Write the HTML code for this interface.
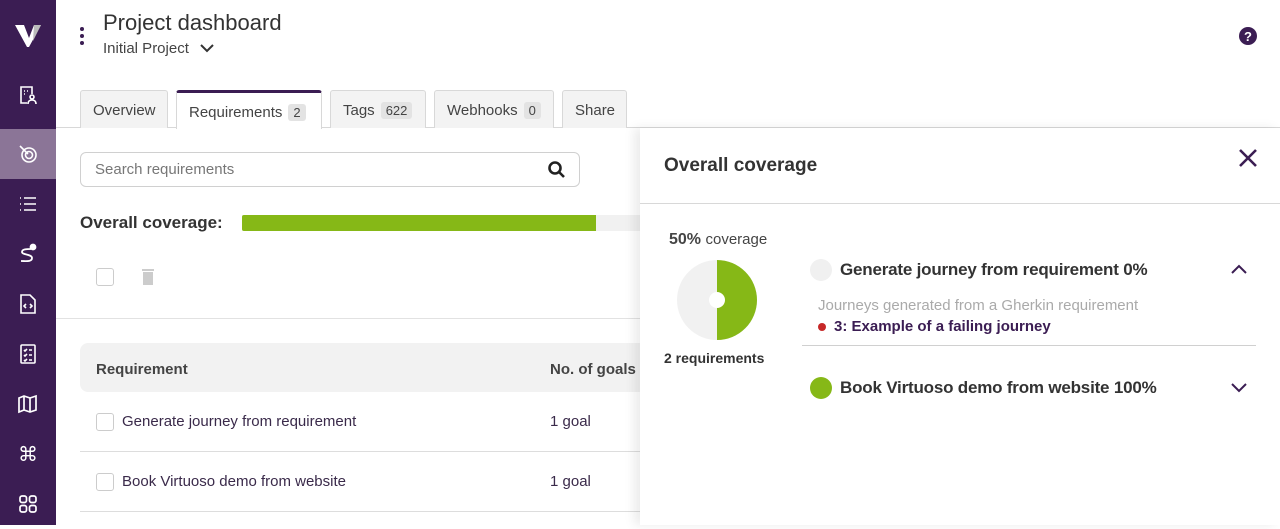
<!DOCTYPE html>
<html><head><style>
*{box-sizing:border-box;margin:0;padding:0}
body{width:1280px;height:525px;overflow:hidden;font-family:"Liberation Sans",sans-serif;background:#fff;position:relative;color:#333}
.sb{position:absolute;left:0;top:0;width:56px;height:525px;background:#3b1d53}
.sb .it{position:absolute;left:0;width:56px;height:50px;display:flex;align-items:center;justify-content:center}
.a{position:absolute}
.tab{position:absolute;top:90px;height:38px;border:1px solid #d8d8d8;border-bottom:none;background:#f3f3f3;border-radius:3px 3px 0 0;font-size:15px;color:#444;padding:11px 12px 0}
.badge{display:inline-block;background:#e3e3e3;border-radius:3px;font-size:13px;padding:1px 5px;margin-left:6px;color:#444}
</style></head><body>
<div class="sb">
 <svg class="a" style="left:15px;top:25px" width="26" height="22" viewBox="0 0 26 22"><path d="M0 0h9l5 13 5-13h7L14 22h-2z" fill="#fff"/><path d="M19 0h7L18 16z" fill="#bbb"/></svg>
 <div class="it" style="top:70px"><svg width="20" height="20" fill="none" stroke="#fff" stroke-width="1.6"><path d="M9 18H3V2h11v7"/><circle cx="14" cy="12" r="2"/><path d="M10 19c0-3 2-4 4-4s4 1 4 4"/><path d="M6 6h1M9 6h1M6 9h1"/></svg></div>
 <div class="it" style="top:129px;background:#8b7597"><svg width="22" height="22" fill="none" stroke="#fff" stroke-width="1.6"><circle cx="12" cy="12" r="7"/><circle cx="12" cy="12" r="3.5"/><path d="M3 3l8 8"/></svg></div>
 <div class="it" style="top:179px"><svg width="20" height="20" fill="none" stroke="#fff" stroke-width="1.6"><path d="M6 4h12M6 10h12M6 16h12M2 4h1M2 10h1M2 16h1"/></svg></div>
 <div class="it" style="top:229px"><svg width="20" height="22" fill="none" stroke="#fff" stroke-width="1.8"><circle cx="15" cy="4" r="2.5" fill="#fff"/><path d="M13 6c-4 0-9 0-9 3s10 2 10 6-6 3-11 3"/></svg></div>
 <div class="it" style="top:279px"><svg width="20" height="22" fill="none" stroke="#fff" stroke-width="1.6"><path d="M3 2h9l5 5v13H3z"/><path d="M8 11l-2 2 2 2M12 11l2 2-2 2"/></svg></div>
 <div class="it" style="top:329px"><svg width="20" height="22" fill="none" stroke="#fff" stroke-width="1.6"><rect x="3" y="2" width="14" height="18" rx="1"/><path d="M6 7l1 1 2-2M6 12l1 1 2-2M6 17l1 1 2-2M11 7h3M11 12h3M11 17h3"/></svg></div>
 <div class="it" style="top:379px"><svg width="22" height="20" fill="none" stroke="#fff" stroke-width="1.7"><path d="M2 4l5-2 6 2 6-2v14l-6 2-6-2-5 2zM7 2v14M13 4v14"/></svg></div>
 <div class="it" style="top:429px"><span style="color:#fff;font-size:20px;font-family:'DejaVu Sans'">⌘</span></div>
 <div class="it" style="top:479px"><svg width="20" height="20" fill="none" stroke="#fff" stroke-width="1.7"><rect x="2" y="2" width="6.5" height="6.5" rx="2"/><rect x="11.5" y="2" width="6.5" height="6.5" rx="2"/><rect x="2" y="11.5" width="6.5" height="6.5" rx="2"/><rect x="11.5" y="11.5" width="6.5" height="6.5" rx="2"/></svg></div>
</div>
<svg class="a" style="left:79px;top:26px" width="6" height="20"><circle cx="3" cy="3" r="2" fill="#3b1d53"/><circle cx="3" cy="10" r="2" fill="#3b1d53"/><circle cx="3" cy="17" r="2" fill="#3b1d53"/></svg>
<div class="a" style="left:103px;top:10px;font-size:22px;color:#333">Project dashboard</div>
<div class="a" style="left:103px;top:40px;font-size:15px;color:#444">Initial Project</div>
<svg class="a" style="left:199px;top:43px" width="16" height="11" fill="none" stroke="#333" stroke-width="2"><path d="M2 2l6 6 6-6"/></svg>
<svg class="a" style="left:1238px;top:26px" width="20" height="20"><circle cx="10" cy="10" r="9" fill="#3b1d53"/><text x="10" y="15" font-size="13" font-weight="bold" fill="#fff" text-anchor="middle" font-family="Liberation Sans">?</text></svg>

<div class="a" style="left:56px;top:127px;width:1224px;height:1px;background:#d8d8d8"></div>
<div class="tab" style="left:80px;width:88px">Overview</div>
<div class="tab" style="left:176px;width:146px;background:#fff;height:39px;border-top:3px solid #3b1d53;padding-top:11px">Requirements<span class="badge">2</span></div>
<div class="tab" style="left:330px;width:96px">Tags<span class="badge">622</span></div>
<div class="tab" style="left:434px;width:120px">Webhooks<span class="badge">0</span></div>
<div class="tab" style="left:562px;width:65px">Share</div>

<div class="a" style="left:80px;top:152px;width:500px;height:35px;border:1px solid #d0d0d0;border-radius:6px;padding:8px 14px;font-size:15px;color:#777">Search requirements</div>
<svg class="a" style="left:547px;top:160px" width="20" height="20" fill="none" stroke="#222" stroke-width="2.6"><circle cx="8" cy="8" r="5.5"/><path d="M12 12l5 5"/></svg>
<div class="a" style="left:80px;top:213px;font-size:17px;font-weight:bold;color:#333">Overall coverage:</div>
<div class="a" style="left:242px;top:215px;width:400px;height:16px;background:#f1f1f1"></div>
<div class="a" style="left:242px;top:215px;width:354px;height:16px;background:#86b817;border-radius:2px 0 0 2px"></div>
<div class="a" style="left:96px;top:268px;width:18px;height:18px;border:1px solid #ccc;border-radius:3px"></div>
<svg class="a" style="left:141px;top:268px" width="14" height="18"><rect x="1" y="1" width="12" height="2" fill="#ccc"/><rect x="2" y="4" width="10" height="13" fill="#ccc"/></svg>
<div class="a" style="left:56px;top:318px;width:600px;height:1px;background:#e2e2e2"></div>
<div class="a" style="left:80px;top:343px;width:580px;height:49px;background:#f2f2f2;border-radius:8px 0 0 8px"></div>
<div class="a" style="left:96px;top:361px;font-size:15px;font-weight:bold;color:#444">Requirement</div>
<div class="a" style="left:550px;top:361px;font-size:15px;font-weight:bold;color:#444">No. of goals</div>
<div class="a" style="left:96px;top:413px;width:18px;height:18px;border:1px solid #ccc;border-radius:3px"></div>
<div class="a" style="left:122px;top:413px;font-size:15px;color:#3a2a4a">Generate journey from requirement</div>
<div class="a" style="left:550px;top:413px;font-size:15px;color:#3a2a4a">1 goal</div>
<div class="a" style="left:80px;top:451px;width:580px;height:1px;background:#ddd"></div>
<div class="a" style="left:96px;top:473px;width:18px;height:18px;border:1px solid #ccc;border-radius:3px"></div>
<div class="a" style="left:122px;top:473px;font-size:15px;color:#3a2a4a">Book Virtuoso demo from website</div>
<div class="a" style="left:550px;top:473px;font-size:15px;color:#3a2a4a">1 goal</div>
<div class="a" style="left:80px;top:511px;width:580px;height:1px;background:#ddd"></div>

<div class="a" style="left:640px;top:128px;width:640px;height:397px;background:#fff;box-shadow:-6px 0 10px rgba(0,0,0,0.08)"></div>
<div class="a" style="left:664px;top:155px;font-size:19px;font-weight:bold;color:#333">Overall coverage</div>
<svg class="a" style="left:1238px;top:148px" width="20" height="20" stroke="#3b1d53" stroke-width="2.6"><path d="M2 2l16 16M18 2L2 18"/></svg>
<div class="a" style="left:640px;top:203px;width:640px;height:1px;background:#d8d8d8"></div>
<div class="a" style="left:669px;top:231px;font-size:16px;color:#444"><b>50%</b> <span style="font-size:15px">coverage</span></div>
<svg class="a" style="left:677px;top:260px" width="80" height="80"><circle cx="40" cy="40" r="40" fill="#f1f1f1"/><path d="M40 0a40 40 0 0 1 0 80z" fill="#86b817"/><circle cx="40" cy="40" r="8" fill="#fff"/></svg>
<div class="a" style="left:664px;top:350px;font-size:14px;font-weight:bold;color:#333">2 requirements</div>
<div class="a" style="left:810px;top:259px;width:22px;height:22px;border-radius:50%;background:#f0f0f0"></div>
<div class="a" style="left:840px;top:260px;font-size:17px;font-weight:bold;color:#333;letter-spacing:-0.2px">Generate journey from requirement 0%</div>
<svg class="a" style="left:1230px;top:263px" width="18" height="12" fill="none" stroke="#3b1d53" stroke-width="2"><path d="M2 10l7-7 7 7"/></svg>
<div class="a" style="left:818px;top:297px;font-size:15px;color:#aaa">Journeys generated from a Gherkin requirement</div>
<div class="a" style="left:818px;top:323px;width:8px;height:8px;border-radius:50%;background:#c62828"></div>
<div class="a" style="left:834px;top:318px;font-size:15px;font-weight:bold;color:#3b1d53">3: Example of a failing journey</div>
<div class="a" style="left:802px;top:345px;width:454px;height:1px;background:#d0d0d0"></div>
<div class="a" style="left:810px;top:377px;width:22px;height:22px;border-radius:50%;background:#86b817"></div>
<div class="a" style="left:840px;top:378px;font-size:17px;font-weight:bold;color:#333;letter-spacing:-0.2px">Book Virtuoso demo from website 100%</div>
<svg class="a" style="left:1230px;top:382px" width="18" height="12" fill="none" stroke="#3b1d53" stroke-width="2"><path d="M2 2l7 7 7-7"/></svg>
</body></html>
